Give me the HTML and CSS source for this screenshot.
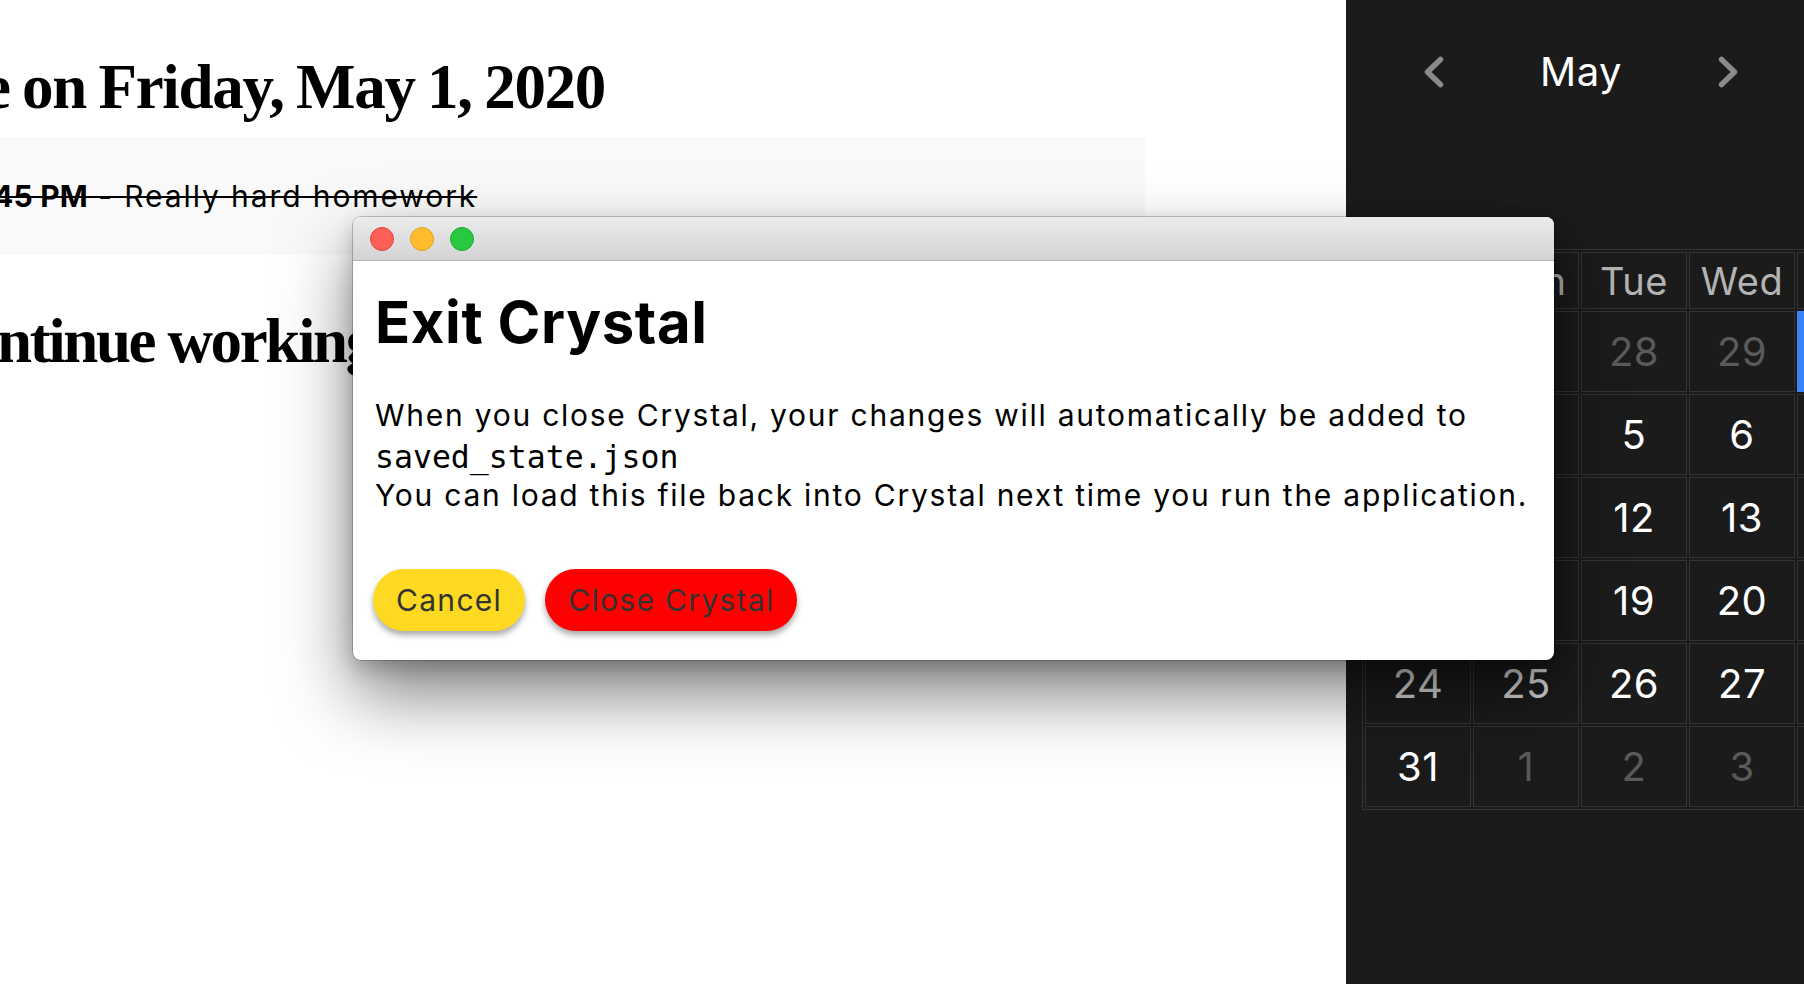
FILE: index.html
```html
<!DOCTYPE html>
<html lang="en">
<head>
<meta charset="utf-8">
<title>Crystal</title>
<link rel="stylesheet" href="styles.css">
</head>
<body>
<div class="app">
  <main class="main">
    <h1 class="day-title">e on Friday, May 1, 2020</h1>
    <div class="task-band">
      <p class="task"><span class="time">45 PM</span> - Really hard homework</p>
    </div>
    <h2 class="continue">ntinue working</h2>
  </main>

  <aside class="calendar">
    <div class="cal-head">
      <button class="chev" aria-label="Previous month">
        <svg viewBox="0 0 22 34" width="22" height="34"><path d="M17.5 4.5 L4.5 17 L17.5 29.5" fill="none" stroke="#8a8a8a" stroke-width="5.5" stroke-linecap="round" stroke-linejoin="round"/></svg>
      </button>
      <span class="month">May</span>
      <button class="chev" aria-label="Next month">
        <svg viewBox="0 0 22 34" width="22" height="34"><path d="M4.5 4.5 L17.5 17 L4.5 29.5" fill="none" stroke="#8a8a8a" stroke-width="5.5" stroke-linecap="round" stroke-linejoin="round"/></svg>
      </button>
    </div>
    <table class="grid">
      <thead>
        <tr><th>Sun</th><th>Mon</th><th>Tue</th><th>Wed</th><th>Thu</th><th>Fri</th><th>Sat</th></tr>
      </thead>
      <tbody>
        <tr><td class="other">26</td><td class="other">27</td><td class="other">28</td><td class="other">29</td><td class="other sel">30</td><td class="today">1</td><td>2</td></tr>
        <tr><td>3</td><td>4</td><td>5</td><td>6</td><td>7</td><td>8</td><td>9</td></tr>
        <tr><td>10</td><td>11</td><td>12</td><td>13</td><td>14</td><td>15</td><td>16</td></tr>
        <tr><td>17</td><td>18</td><td>19</td><td>20</td><td>21</td><td>22</td><td>23</td></tr>
        <tr><td class="dim">24</td><td class="dim">25</td><td>26</td><td>27</td><td>28</td><td>29</td><td>30</td></tr>
        <tr><td>31</td><td class="other">1</td><td class="other">2</td><td class="other">3</td><td class="other">4</td><td class="other">5</td><td class="other">6</td></tr>
      </tbody>
    </table>
  </aside>

  <section class="dialog" role="dialog" aria-labelledby="dlg-title">
    <div class="titlebar">
      <span class="light red"></span>
      <span class="light yellow"></span>
      <span class="light green"></span>
    </div>
    <div class="dialog-body">
      <h3 id="dlg-title" class="dialog-title">Exit Crystal</h3>
      <p class="dialog-text">When you close Crystal, your changes will automatically be added to<br><code>saved_state.json</code><br>You can load this file back into Crystal next time you run the application.</p>
      <div class="actions">
        <button class="btn btn-cancel">Cancel</button>
        <button class="btn btn-close">Close Crystal</button>
      </div>
    </div>
  </section>
</div>
</body>
</html>
```
FILE: styles.css
```css
* { box-sizing: border-box; }

html, body {
  margin: 0;
  padding: 0;
  width: 1804px;
  height: 984px;
  overflow: hidden;
  background: #ffffff;
}

.app {
  position: relative;
  display: flex;
  width: 1804px;
  height: 984px;
  overflow: hidden;
}

/* ---------- main area ---------- */
.main {
  width: 1346px;
  flex: 0 0 1346px;
  height: 984px;
  background: #ffffff;
  padding-top: 56px;
  overflow: hidden;
}

.day-title,
.continue {
  font-family: "Liberation Serif", serif;
  font-weight: 700;
  font-size: 63px;
  line-height: 62px;
  margin: 0;
  color: #000;
  white-space: nowrap;
  letter-spacing: -1.3px;
}

.day-title {
  text-indent: -17px;
  word-spacing: -2px;
}

.task-band {
  margin-top: 19px;
  width: 1145px;
  height: 118px;
  background: #f9f9f9;
  padding-top: 41px;
}

.task {
  margin: 0;
  font-family: "Inter", sans-serif;
  font-size: 30px;
  line-height: 36px;
  letter-spacing: 1.9px;
  color: #000;
  text-decoration: line-through;
  text-decoration-thickness: 2px;
  white-space: nowrap;
  text-indent: -7px;
}

.time { font-weight: 700; letter-spacing: 0.2px; }

.continue {
  margin-top: 55px;
  text-indent: -3px;
  letter-spacing: -2.4px;
}

/* ---------- calendar ---------- */
.calendar {
  flex: 0 0 458px;
  width: 458px;
  height: 984px;
  background: #1b1b1b;
  overflow: hidden;
  padding-left: 16px;
  font-family: "Inter", sans-serif;
}

.cal-head {
  display: flex;
  align-items: center;
  justify-content: center;
  gap: 95px;
  padding-top: 48px;
  padding-right: 4px;
  width: 442px;
  height: 96px;
}

.chev {
  display: flex;
  align-items: center;
  justify-content: center;
  width: 22px;
  height: 48px;
  padding: 0;
  border: none;
  background: none;
}

.month {
  font-size: 40px;
  line-height: 48px;
  color: #ffffff;
  letter-spacing: 0.5px;
}

.grid {
  margin-top: 153px;
  width: 760px;
  table-layout: fixed;
  border-collapse: separate;
  border-spacing: 2px;
  border: 1px solid #353535;
}

.grid th,
.grid td {
  width: 106px;
  border: 1px solid #333333;
  text-align: center;
  vertical-align: middle;
  padding: 0;
}

.grid th {
  height: 57px;
  font-size: 38px;
  font-weight: 400;
  color: #b3b3b3;
  letter-spacing: 0.5px;
}

.grid td {
  height: 81px;
  font-size: 40px;
  color: #ffffff;
  letter-spacing: 0.5px;
}

.grid td.other { color: #5a5a5a; }
.grid td.dim { color: #d6d6d6; }
.grid td.sel { background: #3b84f5; border-color: #3b84f5; }

/* ---------- dialog ---------- */
.dialog {
  position: absolute;
  left: 353px;
  top: 217px;
  width: 1201px;
  background: #ffffff;
  border-radius: 8px;
  overflow: hidden;
  box-shadow: 0 0 0 1px rgba(0, 0, 0, 0.2), 0 34px 70px rgba(0, 0, 0, 0.5), 0 8px 20px rgba(0, 0, 0, 0.2);
}

.titlebar {
  display: flex;
  align-items: center;
  gap: 16px;
  height: 44px;
  padding-left: 17px;
  background: linear-gradient(#ebebeb, #d4d4d4);
  border-bottom: 1px solid #b3b3b3;
}

.light {
  width: 24px;
  height: 24px;
  border-radius: 50%;
}
.light.red { background: #fe5f57; border: 1px solid #e2463f; }
.light.yellow { background: #febc2e; border: 1px solid #dea123; }
.light.green { background: #28c840; border: 1px solid #1eab2f; }

.dialog-body {
  padding: 29px 22px 29px 22px;
  font-family: "Inter", sans-serif;
  color: #000;
}

.dialog-title {
  margin: 0;
  font-size: 58px;
  line-height: 64px;
  font-weight: 700;
  letter-spacing: 0.6px;
}

.dialog-text {
  margin: 41px 0 0 0;
  font-size: 30px;
  line-height: 40px;
  letter-spacing: 1.75px;
  white-space: nowrap;
}

.dialog-text code {
  font-family: "DejaVu Sans Mono", monospace;
  font-size: 31.5px;
  line-height: 34px;
  letter-spacing: 0;
  vertical-align: -2px;
}

.actions {
  display: flex;
  gap: 20px;
  margin-top: 54px;
  margin-left: -2px;
}

.btn {
  height: 62px;
  border: none;
  border-radius: 31px;
  padding: 0 23px;
  font-family: "Inter", sans-serif;
  font-size: 30px;
  letter-spacing: 1.3px;
  color: #333333;
  box-shadow: 0 4px 6px rgba(0, 0, 0, 0.35);
}

.btn-cancel { background: #fdd921; }
.btn-close { background: #ff0000; }
```
